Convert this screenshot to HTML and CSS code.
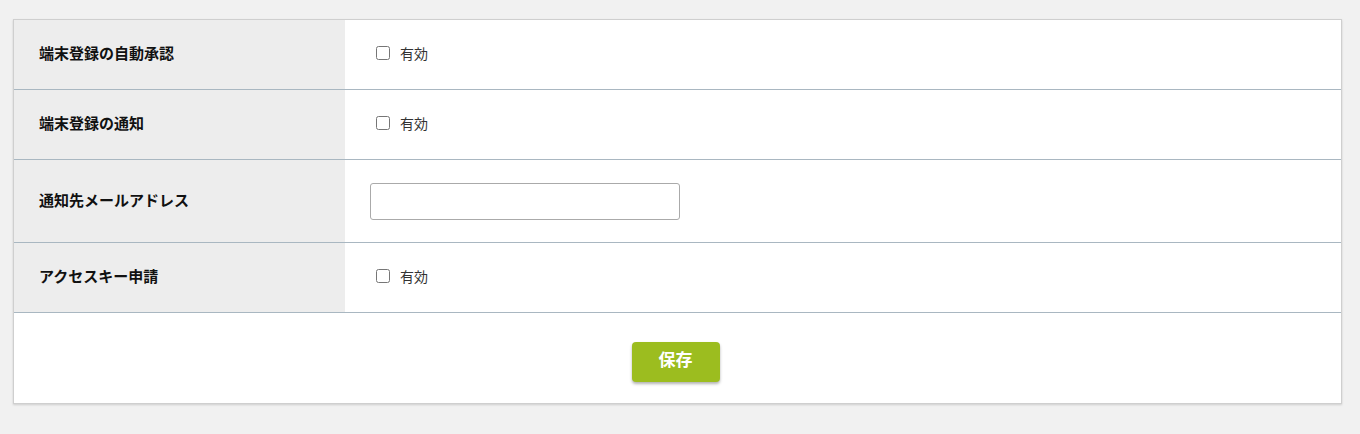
FILE: index.html
```html
<!DOCTYPE html>
<html lang="ja">

<head>
  <meta charset="UTF-8" />
  <meta name="viewport" content="width=device-width, initial-scale=1.0" />
  <title>端末登録設定</title>
  <link rel="stylesheet" href="styles.css">
</head>

<body>
  <div class="panel">
    <table class="settings">
      <tr class="row">
        <th>端末登録の自動承認</th>
        <td>
          <label class="check"><input type="checkbox" />有効</label>
        </td>
      </tr>
      <tr class="row">
        <th>端末登録の通知</th>
        <td>
          <label class="check"><input type="checkbox" />有効</label>
        </td>
      </tr>
      <tr class="row row-tall">
        <th>通知先メールアドレス</th>
        <td>
          <input type="text" class="text-input" />
        </td>
      </tr>
      <tr class="row">
        <th>アクセスキー申請</th>
        <td>
          <label class="check"><input type="checkbox" />有効</label>
        </td>
      </tr>
    </table>

    <div class="actions">
      <button type="button" class="btn-save">保存</button>
    </div>
  </div>
</body>

</html>
```

FILE: styles.css
```css
body {
  margin: 0;
  padding: 19px 18px 30px 13px;
  background-color: #f1f1f1;
  font-family: "Noto Sans CJK JP", "Liberation Sans", sans-serif;
  color: #222;
}

.panel {
  background: #fff;
  border: 1px solid #cfcfcf;
  box-shadow: 0 1px 2px rgba(0, 0, 0, 0.15);
}

.settings {
  width: 100%;
  border-collapse: collapse;
}

.row th,
.row td {
  height: 65px;
  padding: 0 0 4px;
  border-bottom: 1px solid #a9b7c1;
  vertical-align: middle;
}

.row-tall th,
.row-tall td {
  height: 82px;
  padding-bottom: 0;
}

.row th {
  width: 306px;
  padding-left: 25px;
  background-color: #ededed;
  text-align: left;
  font-size: 15px;
  font-weight: bold;
  color: #111;
}

.row-tall th {
  padding-bottom: 4px;
  height: 78px;
}

.row td {
  padding-left: 25px;
}

.check {
  display: flex;
  align-items: center;
  font-size: 14px;
  color: #333;
}

.check input {
  width: 14px;
  height: 14px;
  margin: 1px 10px 0 6px;
}

.text-input {
  display: block;
  box-sizing: border-box;
  width: 310px;
  height: 37px;
  border: 1px solid #aaa;
  border-radius: 3px;
}

.actions {
  display: flex;
  justify-content: center;
  padding: 29px 0 21px;
}

.btn-save {
  width: 88px;
  height: 40px;
  margin-right: 4px;
  padding: 0 0 7px;
  border: none;
  border-radius: 4px;
  background-color: #9cbd1f;
  color: #fff;
  font-family: "Noto Sans CJK JP", sans-serif;
  font-size: 17px;
  font-weight: bold;
  box-shadow: 0 2px 3px rgba(0, 0, 0, 0.3);
}
```
